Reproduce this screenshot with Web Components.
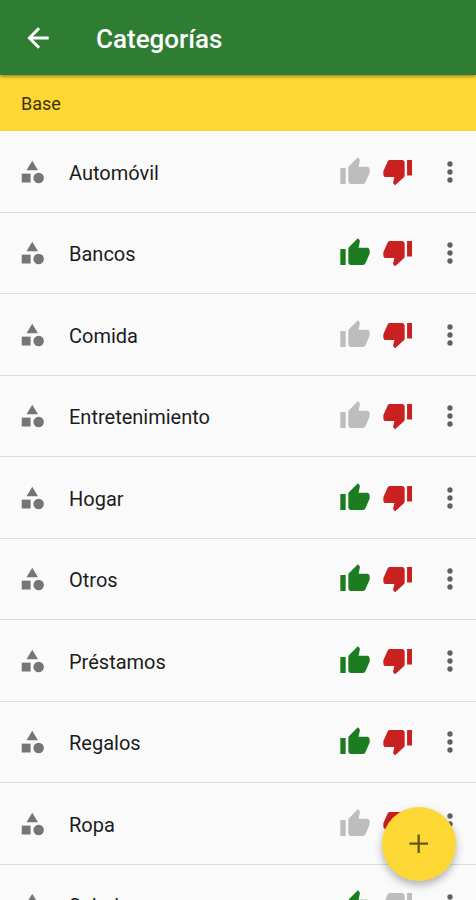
<!DOCTYPE html>
<html lang="es">
<head>
<meta charset="utf-8">
<meta name="viewport" content="width=device-width, initial-scale=1">
<title>Categorías</title>
<style>
    html {
        scrollbar-width: none;
    }
    body {
        margin: 0;
        background: #fafafa;
        color: #1c1c1c;
        font-family: Roboto, sans-serif;
    }
</style>
</head>
<body>
<category-screen></category-screen>

<script>
const ICONS = {
    back: `<path d="M20 10.9H8.2l5.4-5.4L12 4l-8 8 8 8 1.6-1.5-5.4-5.4H20z"/>`,
    category: `<path d="M12.2 2.4l-4.9 8.1h9.8z"/><circle cx="17.7" cy="17.2" r="4.5"/><path d="M3.2 13.4h7.6v7.6H3.2z"/>`,
    up: `<path d="M1 21h4V9H1v12zm22-11c0-1.1-.9-2-2-2h-6.31l.95-4.57.03-.32c0-.41-.17-.79-.44-1.06L14.17 1 7.59 7.59C7.22 7.95 7 8.45 7 9v10c0 1.1.9 2 2 2h9c.83 0 1.54-.5 1.84-1.22l3.02-7.05c.09-.23.14-.47.14-.73v-2z"/>`,
    down: `<path d="M15 3H6c-.83 0-1.54.5-1.84 1.22l-3.02 6.85c-.09.23-.14.47-.14.73v2c0 1.1.9 2 2 2h6.31l-.95 3.8-.03.32c0 .41.17.79.44 1.06L9.83 22l6.59-6c.36-.36.58-.86.58-1.41V5c0-1.1-.9-2-2-2zm3.8 0v11.7h3.7V3h-3.7z"/>`,
    more: `<circle cx="12" cy="6" r="2"/><circle cx="12" cy="12" r="2"/><circle cx="12" cy="18" r="2"/>`,
    add: `<path d="M18.8 12.6h-6.2v6.2h-1.7v-6.2H4.8v-1.7h6.1V4.8h1.7v6.1h6.2z"/>`
};

const CATEGORIES = [
    { name: "Automóvil", income: false, expense: true },
    { name: "Bancos", income: true, expense: true },
    { name: "Comida", income: false, expense: true },
    { name: "Entretenimiento", income: false, expense: true },
    { name: "Hogar", income: true, expense: true },
    { name: "Otros", income: true, expense: true },
    { name: "Préstamos", income: true, expense: true },
    { name: "Regalos", income: true, expense: true },
    { name: "Ropa", income: false, expense: true },
    { name: "Salario", income: true, expense: false }
];

class AppIcon extends HTMLElement {

    constructor() {
        super();
        this.attachShadow({ mode: "open" });
    }

    connectedCallback() {
        this.shadowRoot.innerHTML = `
        <style>
            :host {
                display: block;
                width: 32px;
                height: 32px;
            }
            svg {
                display: block;
                width: 100%;
                height: 100%;
                fill: currentColor;
            }
        </style>
        <svg viewBox="0 0 24 24" aria-hidden="true">${ICONS[this.getAttribute("name")]}</svg>
      `;
    }
}

class AppBar extends HTMLElement {

    constructor() {
        super();
        this.attachShadow({ mode: "open" });
    }

    connectedCallback() {
        this.shadowRoot.innerHTML = `
        <style>
            :host {
                display: block;
                position: sticky;
                top: 0;
                z-index: 1;
                background: #2e7d32;
                color: #fff;
                box-shadow: 0 1px 4px rgba(0, 0, 0, 0.5);
            }
            header {
                display: flex;
                align-items: center;
                gap: 42px;
                padding: 0 22px;
                height: 75px;
            }
            button {
                padding: 0;
                border: 0;
                background: none;
                color: inherit;
            }
            h1 {
                margin: 0;
                padding-top: 3px;
                font-size: 26px;
                line-height: 32px;
                font-weight: 500;
            }
        </style>
        <header>
            <button type="button" aria-label="Volver"><app-icon name="back"></app-icon></button>
            <h1><slot></slot></h1>
        </header>
      `;
    }
}

class CategoryGroup extends HTMLElement {

    constructor() {
        super();
        this.attachShadow({ mode: "open" });
    }

    connectedCallback() {
        this.shadowRoot.innerHTML = `
        <style>
            :host {
                display: block;
            }
            h2 {
                margin: 0;
                padding: 17px 21px 15px;
                background: #fdd835;
                color: #3a3418;
                font-size: 18px;
                line-height: 24px;
                font-weight: 400;
            }
            ::slotted(category-row) {
                height: 82px;
            }
            ::slotted(category-row:nth-child(even)) {
                height: 81px;
            }
        </style>
        <section>
            <h2>${this.getAttribute("label")}</h2>
            <div role="list"><slot></slot></div>
        </section>
      `;
    }
}

class CategoryRow extends HTMLElement {

    constructor() {
        super();
        this.attachShadow({ mode: "open" });
    }

    connectedCallback() {
        const income = this.hasAttribute("income");
        const expense = this.hasAttribute("expense");
        this.setAttribute("role", "listitem");
        this.shadowRoot.innerHTML = `
        <style>
            :host {
                display: flex;
                align-items: center;
                box-sizing: border-box;
                padding: 0 10px 0 18px;
                border-bottom: 1px solid #dcdcdc;
            }
            .kind {
                width: 28px;
                height: 28px;
                color: #757575;
            }
            .name {
                flex: 1;
                margin-left: 23px;
                padding-top: 2px;
                font-size: 20px;
                line-height: 24px;
            }
            button {
                padding: 0;
                border: 0;
                background: none;
                color: #bdbdbd;
            }
            .actions {
                display: flex;
                gap: 11px;
                margin-right: 20px;
            }
            .income[aria-pressed="true"] {
                color: #1b7d20;
            }
            .expense[aria-pressed="true"] {
                color: #c92020;
            }
            .more {
                color: #616161;
            }
        </style>
        <app-icon class="kind" name="category"></app-icon>
        <span class="name"><slot></slot></span>
        <div class="actions">
            <button type="button" class="income" aria-label="Ingreso" aria-pressed="${income}"><app-icon name="up"></app-icon></button>
            <button type="button" class="expense" aria-label="Gasto" aria-pressed="${expense}"><app-icon name="down"></app-icon></button>
        </div>
        <button type="button" class="more" aria-label="Más opciones"><app-icon name="more"></app-icon></button>
      `;
        this.shadowRoot.querySelectorAll(".actions button").forEach((button) => {
            button.addEventListener("click", () => {
                button.setAttribute("aria-pressed", button.getAttribute("aria-pressed") !== "true");
            });
        });
    }
}

class FloatingButton extends HTMLElement {

    constructor() {
        super();
        this.attachShadow({ mode: "open" });
    }

    connectedCallback() {
        this.shadowRoot.innerHTML = `
        <style>
            :host {
                display: block;
                position: fixed;
                right: 20px;
                bottom: 19px;
                z-index: 2;
            }
            button {
                display: flex;
                align-items: center;
                justify-content: center;
                width: 74px;
                height: 74px;
                padding: 0;
                border: 0;
                border-radius: 50%;
                background: #fdd835;
                color: #655615;
                box-shadow: 0 4px 9px rgba(0, 0, 0, 0.3);
            }
        </style>
        <button type="button" aria-label="${this.getAttribute("label")}"><app-icon name="add"></app-icon></button>
      `;
    }
}

class CategoryScreen extends HTMLElement {

    constructor() {
        super();
        this.attachShadow({ mode: "open" });
    }

    connectedCallback() {
        const rows = CATEGORIES.map((item) => `<category-row ${item.income ? "income" : ""} ${item.expense ? "expense" : ""}>${item.name}</category-row>`).join("");
        this.shadowRoot.innerHTML = `
        <style>
            :host {
                display: block;
            }
        </style>
        <app-bar>Categorías</app-bar>
        <main>
            <category-group label="Base">${rows}</category-group>
        </main>
        <floating-button label="Agregar categoría"></floating-button>
      `;
    }
}

customElements.define("app-icon", AppIcon);
customElements.define("app-bar", AppBar);
customElements.define("category-row", CategoryRow);
customElements.define("category-group", CategoryGroup);
customElements.define("floating-button", FloatingButton);
customElements.define("category-screen", CategoryScreen);
</script>
</body>
</html>
